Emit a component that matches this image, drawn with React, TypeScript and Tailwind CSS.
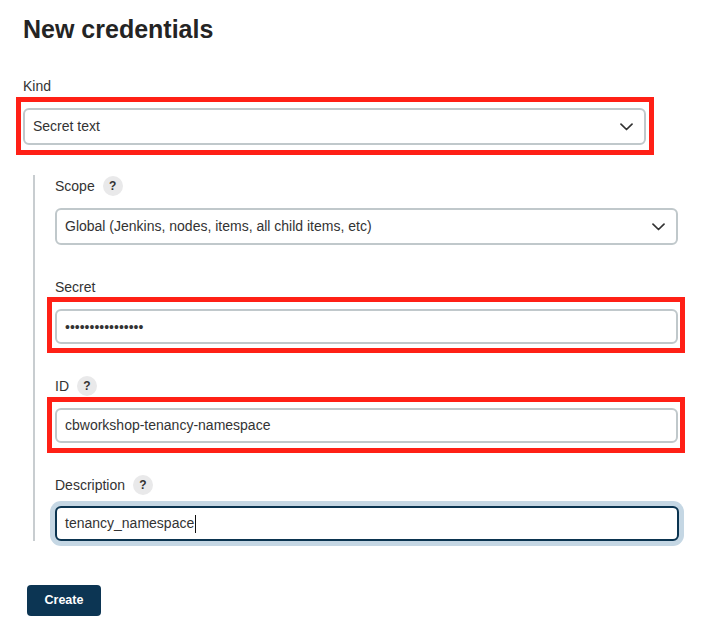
import React from "react";

const font = { fontFamily: '"Liberation Sans", Arial, Helvetica, sans-serif' };

function Help() {
  return (
    <span className="flex h-[20px] w-[20px] items-center justify-center rounded-full bg-[#e9e9ea] text-[12px] font-bold leading-none text-[#333]">
      ?
    </span>
  );
}

function Label({ text, help, mb = "mb-[12px]" }: { text: string; help?: boolean; mb?: string }) {
  return (
    <div className={`flex h-[20px] items-center gap-[8px] ${mb}`}>
      <span className="text-[14px] leading-[20px] text-[#333]">{text}</span>
      {help && <Help />}
    </div>
  );
}

function Chevron() {
  return (
    <svg width="13" height="8" viewBox="0 0 13 8" fill="none">
      <path d="M1 1.2l5.5 5.3 5.5-5.3" stroke="#333" strokeWidth="1.7" strokeLinecap="round" strokeLinejoin="round" />
    </svg>
  );
}

function Select({ value }: { value: string }) {
  return (
    <div className="flex h-[37px] w-[623px] items-center justify-between rounded-[6px] border-2 border-[#c0c8cb] bg-white pl-[8px] pr-[11px]">
      <span className="text-[14px] text-[#333]">{value}</span>
      <Chevron />
    </div>
  );
}

function Annot({ children, off }: { children: React.ReactNode; off: string }) {
  return (
    <div className="relative w-[623px]">
      {children}
      <div className={`pointer-events-none absolute border-[5px] border-[#ff2016] ${off}`} />
    </div>
  );
}

export default function App() {
  return (
    <div className="min-h-[644px] w-[711px] bg-white px-[23px] pt-[14px]" style={font}>
      <h1 className="text-[25px] font-bold leading-[30px] text-[#242424]">New credentials</h1>

      <div className="mt-[32px]">
        <Label text="Kind" />
        <Annot off="-left-[7px] -top-[11px] -right-[8px] -bottom-[10px]">
          <Select value="Secret text" />
        </Annot>
      </div>

      <div className="ml-[10px] mt-[30px] w-[645px] border-l-2 border-[#c8cdd0] pl-[20px] pt-[1px]">
        <div>
          <Label text="Scope" help />
          <Select value="Global (Jenkins, nodes, items, all child items, etc)" />
        </div>

        <div className="mt-[32px]">
          <Label text="Secret" />
          <Annot off="-left-[8px] -top-[12px] -right-[7px] -bottom-[9px]">
            <input
              type="password"
              readOnly
              value="xxxxxxxxxxxxxxxx"
              className="block h-[35px] w-[623px] rounded-[6px] border-2 border-[#c0c8cb] bg-white px-[8px] text-[14px] text-[#333] outline-none"
              style={font}
            />
          </Annot>
        </div>

        <div className="mt-[32px]">
          <Label text="ID" help />
          <Annot off="-left-[8px] -top-[11px] -right-[7px] -bottom-[10px]">
            <div className="flex h-[35px] w-[623px] items-center rounded-[6px] border-2 border-[#c0c8cb] bg-white px-[8px] text-[14px] text-[#333]">
              cbworkshop-tenancy-namespace
            </div>
          </Annot>
        </div>

        <div className="mt-[32px]">
          <Label text="Description" help mb="mb-[11px]" />
          <div className="flex h-[35px] w-[624px] items-center rounded-[6px] border-2 border-[#0b3450] bg-white px-[8px] text-[14px] text-[#333] shadow-[0_0_0_5px_#c5d7e4]">
            <span>tenancy_namespace</span>
            <span className="ml-[1px] inline-block h-[18px] w-[1px] bg-[#111]" />
          </div>
        </div>
      </div>

      <button className="ml-[4px] mt-[44px] flex h-[31px] w-[74px] items-center justify-center rounded-[4px] bg-[#0c3553] text-[12.5px] font-bold text-white">
        Create
      </button>
    </div>
  );
}
